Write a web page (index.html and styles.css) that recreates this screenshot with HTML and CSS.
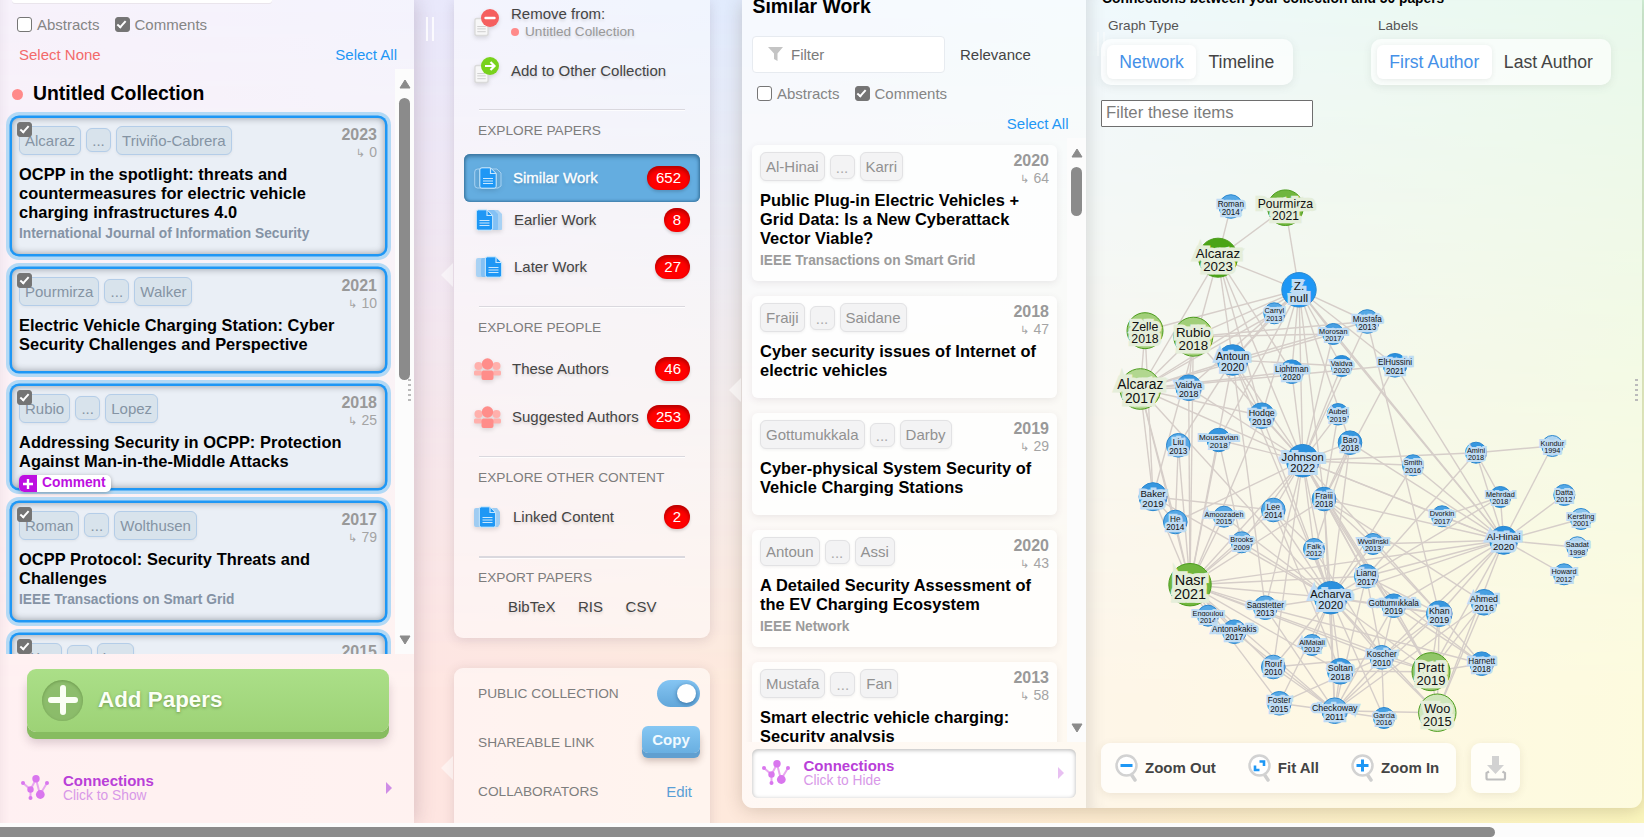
FILE: index.html
```html
<!DOCTYPE html>
<html lang="en">
<head>
<meta charset="utf-8">
<title>Similar Work</title>
<link rel="stylesheet" href="styles.css">
</head>
<body>
<svg class="defs" width="0" height="0" aria-hidden="true">
  <symbol id="i-net" viewBox="0 0 28 26"><g stroke="#e9a6f0" stroke-width="2"><path d="M2 8 9.500 14.500 9.500 23M9.500 14.500 15 4 19 19.500 26 8" fill="none"/></g><g fill="#d976ee"><circle cx="2" cy="8" r="2"/><circle cx="26" cy="8" r="2"/><circle cx="9.500" cy="23" r="2"/><circle cx="9.500" cy="14.500" r="3.200"/><circle cx="15" cy="3.800" r="3.700"/><circle cx="19.300" cy="19.500" r="4.400"/></g></symbol>
  <symbol id="i-people" viewBox="0 0 27 22"><g fill="#ffb0ac"><circle cx="4.500" cy="8" r="4"/><circle cx="22.500" cy="8" r="4"/><rect y="12.500" width="8" height="5" rx="1.500"/><rect x="19" y="12.500" width="8" height="5" rx="1.500"/></g><g fill="#ff8d8a"><circle cx="13.500" cy="6" r="5.700"/><path d="M9 12.500h9q2 1 1.500 5.500v2q0 2-2 2h-8q-2 0-2-2v-2q-.5-4.500 1.500-5.500z"/></g></symbol>
  <symbol id="i-doc" viewBox="0 0 18 22"><path d="M3 .8h8.500l5.700 5.700v12.700q0 2-2 2H2.800q-2 0-2-2V2.800q0-2 2.200-2z" fill="#1e97f5" stroke="#d7eefd" stroke-width="1"/><path d="M11.500 1v5.500h5.500M4 11.500h10M4 14h10M4 16.500h10" stroke="#c9e7fd" stroke-width="1.200" fill="none"/></symbol>
  <symbol id="i-lens" viewBox="0 0 24 28"><path d="m16 20 4 6" stroke="#cfcfcf" stroke-width="3.500" stroke-linecap="round"/><circle cx="11.500" cy="11.500" r="10" fill="#fff" stroke="#d2d2d2" stroke-width="2.500"/></symbol>
  <symbol id="i-sheet" viewBox="0 0 16 20"><rect x="1" y="1" width="14" height="18" rx="2" fill="#f7f7f7" stroke="#dadada" stroke-width="1.500"/><path d="M3.500 9.500h9M3.500 12h9M3.500 15h9" stroke="#ccc"/></symbol>
</svg>
<main class="board">
  <section class="panel collection">
    <div class="search-end"></div>
    <div class="checks"><i class="box"></i><span>Abstracts</span><i class="box on"></i><span>Comments</span></div>
    <div class="selects"><a class="none">Select None</a><a>Select All</a></div>
    <div class="scroller">
      <div class="list">
        <h2><i class="dot"></i>Untitled Collection</h2>
        <article class="card picked"><i class="box on tick"></i><header><span class="chip">Alcaraz</span><span class="chip mid">...</span><span class="chip">Triviño-Cabrera</span><div class="when"><b>2023</b><small><i>↳</i> 0</small></div></header><h3>OCPP in the spotlight: threats and countermeasures for electric vehicle charging infrastructures 4.0</h3><p>International Journal of Information Security</p></article>
        <article class="card picked"><i class="box on tick"></i><header><span class="chip">Pourmirza</span><span class="chip mid">...</span><span class="chip">Walker</span><div class="when"><b>2021</b><small><i>↳</i> 10</small></div></header><h3>Electric Vehicle Charging Station: Cyber Security Challenges and Perspective</h3></article>
        <article class="card picked"><i class="box on tick"></i><header><span class="chip">Rubio</span><span class="chip mid">...</span><span class="chip">Lopez</span><div class="when"><b>2018</b><small><i>↳</i> 25</small></div></header><h3>Addressing Security in OCPP: Protection Against Man-in-the-Middle Attacks</h3><div class="comment"><i><svg width="10" height="10"><path d="M5 0v10M0 5h10" stroke="#fff" stroke-width="2.400"/></svg></i>Comment</div></article>
        <article class="card picked"><i class="box on tick"></i><header><span class="chip">Roman</span><span class="chip mid">...</span><span class="chip">Wolthusen</span><div class="when"><b>2017</b><small><i>↳</i> 79</small></div></header><h3>OCPP Protocol: Security Threats and Challenges</h3><p>IEEE Transactions on Smart Grid</p></article>
        <article class="card picked"><i class="box on tick"></i><header><span class="chip">Woo</span><span class="chip mid">...</span><span class="chip">Lee</span><div class="when"><b>2015</b><small><i>↳</i> 0</small></div></header></article>
      </div>
      <div class="bar"><svg width="12" height="10"><path d="M1 9 6 1l5 8z" fill="#8b8b8b" stroke="#8b8b8b" stroke-linejoin="round"/></svg><i class="thumb long"></i><svg class="down" width="12" height="10"><path d="M1 1 6 9l5-8z" fill="#8b8b8b" stroke="#8b8b8b" stroke-linejoin="round"/></svg></div>
    </div>
    <div class="add"><span class="plus"><svg width="30" height="30"><path d="M15 3v24M3 15h24" stroke="#fbfff5" stroke-width="6" stroke-linecap="round"/></svg></span>Add Papers</div>
    <div class="conn"><svg width="28" height="26"><use href="#i-net"/></svg><div><b>Connections</b><span>Click to Show</span></div><i class="tri"></i></div>
    <i class="dots left"></i>
  </section>

  <div class="middle">
    <i class="grip"></i><i class="notch one"></i><i class="notch two"></i>
    <section class="panel menu">
      <div class="item two"><svg width="26" height="28"><use href="#i-sheet" x="0" y="8" width="15" height="20"/><circle cx="16" cy="9" r="9" fill="#f55f5f"/><path d="M11.500 9h9" stroke="#fff" stroke-width="2.400" stroke-linecap="round"/></svg><div>Remove from:<small><i></i>Untitled Collection</small></div></div>
      <div class="item two other"><svg width="26" height="28"><use href="#i-sheet" x="0" y="7" width="15" height="20"/><circle cx="16" cy="9" r="9" fill="#78d21c"/><path d="M11 9h9M16.500 5l4 4-4 4" stroke="#fff" stroke-width="2.200" fill="none"/></svg><div>Add to Other Collection</div></div>
      <hr><h4>EXPLORE PAPERS</h4>
      <div class="item active"><svg width="28" height="22"><rect x=".7" y="2" width="18" height="19" rx="3" fill="none" stroke="#a6d0f0"/><path d="M18 2h5l4 4v13l-3 2h-8" fill="none" stroke="#a6d0f0"/><use href="#i-doc" x="5" y="0" width="18" height="22"/></svg><span>Similar Work</span><em>652</em></div>
      <div class="item early"><svg width="28" height="22"><path d="M12 1h10l4 4v15q0 1-1 1H12z" fill="#a9d2f4"/><path d="M10 1h8l4 4v15q0 1-1 1H10z" fill="#84c1f4"/><use href="#i-doc" x="-.5" y="0" width="18" height="22"/></svg><span>Earlier Work</span><em>8</em></div>
      <div class="item late"><svg width="28" height="22"><rect x="0" y="2" width="12" height="19" rx="2" fill="#a9d2f4"/><rect x="5" y="2" width="12" height="19" rx="2" fill="#84c1f4"/><use href="#i-doc" x="8.500" y="0" width="18" height="22"/></svg><span>Later Work</span><em>27</em></div>
      <hr><h4>EXPLORE PEOPLE</h4>
      <div class="item who"><svg width="28" height="23"><use href="#i-people" width="27" height="22"/></svg><span>These Authors</span><em>46</em></div>
      <div class="item who"><svg width="28" height="23"><use href="#i-people" width="27" height="22"/></svg><span>Suggested Authors</span><em>253</em></div>
      <hr><h4>EXPLORE OTHER CONTENT</h4>
      <div class="item linked"><svg width="28" height="22"><rect x="0" y="2" width="14" height="19" rx="2" fill="#9fccf2"/><path d="M12 2h11l3 4v12l-2 3H12z" fill="#9fccf2"/><use href="#i-doc" x="4.500" y="0" width="18" height="22"/></svg><span>Linked Content</span><em>2</em></div>
      <hr class="last"><h4>EXPORT PAPERS</h4>
      <div class="export"><span>BibTeX</span><span>RIS</span><span>CSV</span></div>
    </section>
    <section class="panel share">
      <div>PUBLIC COLLECTION<i class="toggle"></i></div>
      <div>SHAREABLE LINK<b class="copy">Copy</b></div>
      <div>COLLABORATORS<a>Edit</a></div>
    </section>
  </div>

  <div class="wide">
    <i class="notch three"></i>
    <section class="similar">
      <h2>Similar Work</h2>
      <div class="filter"><div class="field"><svg width="16" height="15"><path d="M0 0h15L9.500 6.500V14L6 12V6.500z" fill="#c4c4c4"/></svg>Filter</div><span>Relevance</span></div>
      <div class="checks"><i class="box"></i><span>Abstracts</span><i class="box on"></i><span>Comments</span></div>
      <div class="selects"><a>Select All</a></div>
      <div class="scroller">
        <div class="list">
          <article class="card"><header><span class="chip">Al-Hinai</span><span class="chip mid">...</span><span class="chip">Karri</span><div class="when"><b>2020</b><small><i>↳</i> 64</small></div></header><h3>Public Plug-in Electric Vehicles + Grid Data: Is a New Cyberattack Vector Viable?</h3><p>IEEE Transactions on Smart Grid</p></article>
          <article class="card"><header><span class="chip">Fraiji</span><span class="chip mid">...</span><span class="chip">Saidane</span><div class="when"><b>2018</b><small><i>↳</i> 47</small></div></header><h3>Cyber security issues of Internet of electric vehicles</h3></article>
          <article class="card"><header><span class="chip">Gottumukkala</span><span class="chip mid">...</span><span class="chip">Darby</span><div class="when"><b>2019</b><small><i>↳</i> 29</small></div></header><h3>Cyber-physical System Security of Vehicle Charging Stations</h3></article>
          <article class="card"><header><span class="chip">Antoun</span><span class="chip mid">...</span><span class="chip">Assi</span><div class="when"><b>2020</b><small><i>↳</i> 43</small></div></header><h3>A Detailed Security Assessment of the EV Charging Ecosystem</h3><p>IEEE Network</p></article>
          <article class="card"><header><span class="chip">Mustafa</span><span class="chip mid">...</span><span class="chip">Fan</span><div class="when"><b>2013</b><small><i>↳</i> 58</small></div></header><h3>Smart electric vehicle charging: Security analysis</h3></article>
        </div>
        <div class="bar"><svg width="12" height="10"><path d="M1 9 6 1l5 8z" fill="#8b8b8b" stroke="#8b8b8b" stroke-linejoin="round"/></svg><i class="thumb"></i><svg class="down" width="12" height="10"><path d="M1 1 6 9l5-8z" fill="#8b8b8b" stroke="#8b8b8b" stroke-linejoin="round"/></svg></div>
      </div>
      <div class="conn open"><svg width="28" height="26"><use href="#i-net"/></svg><div><b>Connections</b><span>Click to Hide</span></div><i class="tri"></i></div>
    </section>
    <section class="network">
      <h5>Connections between your collection and 50 papers</h5>
      <div class="options">
        <div><label>Graph Type</label><div class="seg"><span class="on">Network</span><span>Timeline</span></div></div>
        <div><label>Labels</label><div class="seg"><span class="on">First Author</span><span>Last Author</span></div></div>
      </div>
      <input class="find" placeholder="Filter these items">
      <svg class="graph" viewBox="1101 127 541 616" width="541" height="616"></svg>
      <div class="tools">
        <div class="zoom">
          <span><svg width="24" height="28"><use href="#i-lens"/><path d="M5.500 11.500h12" stroke="#1e97f5" stroke-width="3"/></svg>Zoom Out</span>
          <span><svg width="24" height="28"><use href="#i-lens"/><path d="M11.500 7.500h4.500V12M11.500 16H7v-4.500" fill="none" stroke="#1e97f5" stroke-width="2.600"/></svg>Fit All</span>
          <span><svg width="24" height="28"><use href="#i-lens"/><path d="M5.500 11.500h12M11.500 5.500v12" stroke="#1e97f5" stroke-width="3"/></svg>Zoom In</span>
        </div>
        <div class="save"><svg width="22" height="26"><path d="M7 1h7v9h5l-8.500 9L2 10h5z" fill="#d2d2d2"/><path d="M4 16.500 1.500 18v5q0 1.500 1.500 1.500h15.500q1.500 0 1.500-1.500v-5L17.500 16.500" fill="none" stroke="#bebebe" stroke-width="2.200"/></svg></div>
      </div>
      <i class="grip"></i><i class="dots"></i>
    </section>
  </div>
</main>
<footer class="hbar"><i></i></footer>
<script src="graph.js"></script>
</body>
</html>
```
FILE: styles.css
```css
* { box-sizing: border-box; }
body { margin: 0; width: 1644px; height: 837px; overflow: hidden; font: 15px/18px "Liberation Sans", Arial, sans-serif; color: #444; background: #fcfcfc; }
h2, h3, h4, h5, p { margin: 0; }
i, em { font-style: normal; }
.defs { position: absolute; }
.board { position: relative; display: flex; height: 823px; overflow: hidden; background: linear-gradient(90deg, #efe4f7 0, #e9e8fb 430px, #e1ebfd 730px, #e0f2fa 1100px, #d2f2d9 100%); }
.board::before { content: ""; position: absolute; inset: 0; background: linear-gradient(90deg, #ffe1e4 0, #fee5e1 430px, #fee9dc 730px, #fdecd0 1100px, #fbf6bd 100%); -webkit-mask-image: linear-gradient(transparent, #000 85%); mask-image: linear-gradient(transparent, #000 85%); }
.board > * { position: relative; }
.panel { background: rgba(255,255,255,.5); box-shadow: 0 2px 12px rgba(90,60,80,.16); }

.collection { width: 414px; flex: none; display: flex; flex-direction: column; box-shadow: 2px 0 18px rgba(90,60,80,.22), inset 12px 0 10px -10px rgba(90,60,80,.07); }
.search-end { width: 260px; height: 3px; margin-left: 12px; background: #fff; border-radius: 0 0 4px 4px; box-shadow: 0 1px 0 #eae5ec; flex: none; }
.checks { display: flex; align-items: center; color: #858585; }
.collection .checks { margin: 13px 0 0 17px; height: 17px; }
.box { flex: none; width: 15px; height: 15px; margin-right: 5px; border: 1.500px solid #767676; border-radius: 3px; background: #fff; }
.checks span { margin-right: 15px; }
.box.on { background: #747474; position: relative; }
.box.on::after { content: ""; position: absolute; left: 3.500px; top: .5px; width: 5px; height: 9px; box-sizing: border-box; border: solid #fff; border-width: 0 2.200px 2.200px 0; transform: rotate(42deg); }
.selects { display: flex; justify-content: space-between; color: #1e97f5; }
.selects .none { color: #f36a6a; }
.collection .selects { margin: 13px 17px 5px 19px; height: 18px; }
.scroller { display: flex; overflow: hidden; }
.collection .scroller { height: 585px; flex: none; }
.list { flex: 1; overflow: hidden; }
h2 { font-size: 19.400px; line-height: 22px; color: #000; }
.collection h2 { display: flex; align-items: center; height: 49px; padding: 0 0 2px 12px; }
.dot { width: 11px; height: 11px; border-radius: 50%; background: #ff8a8a; margin: 4px 10px 0 0; }
.card { position: relative; margin: 0 10px 15px; padding: 7px 8px 18px; border-radius: 6px; background: rgba(255,255,255,.72); box-shadow: 0 2px 7px rgba(90,70,80,.1); }
.card.picked { margin: 0 10px 15px 12px; padding: 8px 8px 17px 7px; border-radius: 7px; background: #eaeff6; box-shadow: 0 0 0 2.500px #1e97f5, 0 0 0 6px #b3d9f5, inset 0 0 7px rgba(40,50,60,.45); }
.card header { display: flex; align-items: flex-start; height: 39px; gap: 5px; }
.chip { height: 29px; padding: 5px 5px; border: 1px solid #e2e2e4; border-radius: 6px; background: #f3f3f4; color: #919191; box-shadow: 0 1px 3px rgba(0,0,0,.06); }
.chip.mid { width: 25px; height: 24px; margin-top: 3px; padding: 3px 0; text-align: center; color: #aaa; }
.picked .chip { background: #d8e3ec; border-color: #b4cde8; color: #8594a4; }
.picked .chip.mid { margin-top: 2px; }
.when { margin-left: auto; text-align: right; color: #999; line-height: 18px; }
.when b { display: block; font-size: 16px; }
.when small { display: block; font-size: 14px; line-height: 16px; color: #a4a4a4; }
.when i { font: 11px "DejaVu Sans", sans-serif; }
.tick { position: absolute; left: 5px; top: 4px; z-index: 1; margin: 0; }
.tick.box.on { position: absolute; border-width: 1px; }
.card h3 { font-size: 16.400px; letter-spacing: .05px; line-height: 19px; color: #000; margin-right: -4px; }
.picked h3 { padding-right: 20px; }
.card p { height: 15px; margin: 4px 0 -4px; font-weight: bold; font-size: 13.750px; line-height: 17px; color: #9b9b9b; }
.picked h3 + p { color: #8593a5; line-height: 16px; }
.comment { position: absolute; left: 7px; top: 89px; height: 17px; display: flex; align-items: center; background: #fff; border-radius: 5px; overflow: hidden; color: #bd0fe1; font: bold 13.800px/15px "Liberation Sans", sans-serif; padding: 0 5px 2px 0; box-shadow: 0 1px 4px rgba(0,0,0,.3); }
.comment i { width: 18px; height: 17px; background: #bd0fe1; margin: 2px 5px 0 0; display: grid; place-items: center; }
.bar { width: 19px; background: #fcfcfc; display: flex; flex-direction: column; align-items: center; padding: 10px 0 9px; flex: none; }
.thumb { width: 11px; height: 49px; margin-top: 9px; border-radius: 6px; background: #8b8b8b; }
.thumb.long { height: 282px; }
.down { margin-top: auto; }
.add { flex: none; display: flex; align-items: center; width: 362px; height: 63px; margin: 15px 0 7px 27px; padding: 0 0 1px 15px; border-radius: 9px; background: linear-gradient(#abdf88, #9dd276); box-shadow: 0 7px 0 #87bc60, 0 11px 10px rgba(90,60,80,.22); color: #fbfff5; font-size: 22.400px; font-weight: bold; text-shadow: 0 1px 3px rgba(60,90,30,.5); }
.plus { width: 41px; height: 41px; margin: 0 15px 0 0; display: grid; place-items: center; border-radius: 50%; background: rgba(125,170,95,.6); box-shadow: inset 0 1px 3px rgba(60,100,30,.4); }
.conn { display: flex; align-items: center; }
.conn div { line-height: 15px; }
.conn b, .conn span { display: block; }
.conn b { color: #b93fd8; }
.conn span { font-size: 13.800px; color: #d898e8; }
.collection .conn { height: 50px; margin: 24px 22px 0 21px; }
.conn div { margin-left: 14px; }
.tri { margin-left: auto; border: solid transparent; border-width: 6px 0 6px 6px; border-left-color: #cf8de6; }
.dots { position: absolute; left: 1635px; top: 379px; width: 3px; height: 24px; background: repeating-linear-gradient(#bbb 0 2px, transparent 2px 5px); }
.dots.left { left: 408px; }

.middle { width: 256px; margin-left: 40px; flex: none; position: relative; }
.grip { position: absolute; left: -28px; top: 17px; width: 8px; height: 24px; border: solid rgba(255,255,255,.8); border-width: 0 2px; }
.notch { position: absolute; left: -13px; border: solid transparent; border-width: 12px 12px 12px 0; border-right-color: rgba(255,255,255,.5); }
.notch.one { top: 263px; } .notch.two { top: 756px; }
.notch.three { top: 378px; }
.menu { height: 638px; padding: 0 10px; border-radius: 0 0 9px 9px; }
.menu .item { position: relative; display: flex; align-items: center; height: 48px; padding: 0 10px; text-shadow: 0 2px 3px rgba(0,0,0,.15); }
.item svg { flex: none; margin-right: 11px; filter: drop-shadow(0 2px 2px rgba(0,0,0,.12)); }
.item.two div { line-height: 18px; }
.item.two small { display: block; font-size: 13.600px; color: #999; }
.item.two small i { display: inline-block; width: 8px; height: 8px; border-radius: 50%; background: #ff8a8a; margin-right: 6px; }
.menu .item.two { height: 46px; }
.menu .item.other { height: 48px; padding-top: 2px; }
.item em { margin-left: auto; min-width: 26px; height: 24px; padding: 3px 9px; border-radius: 12px; background: #f00; color: #fff; text-align: center; box-shadow: inset 0 3px 4px rgba(90,0,0,.45), 0 2px 3px rgba(0,0,0,.15); text-shadow: none; }
.item span { white-space: nowrap; }
.item.active { border-radius: 6px; background: #64ade0; color: #fff; box-shadow: inset 0 0 3px 1px #39759f, inset 0 3px 4px rgba(20,60,90,.35); -webkit-text-stroke: .3px #fff; }
.item.active em { -webkit-text-stroke: 0; }
.menu .early { height: 37px; margin-top: -1px; }
.menu .late { height: 58px; }
.early svg, .late svg { margin: 0 10px 0 2px; }
.item.who svg { margin-right: 10px; }
.menu hr { height: 2px; margin: 15px 15px 0; border: 0; border-top: 1px solid #dad8de; background: rgba(255,255,255,.8); }
h4 { font-size: 13.700px; font-weight: normal; line-height: 18px; color: #7d7d7d; padding-left: 14px; }
.menu h4 { margin: 11px 0 14px; }
.menu .late + hr { margin-top: 10px; }
.menu .late + hr + h4 { margin: 11px 0 8px; }
.menu .linked { margin-top: -9px; height: 50px; }
.menu hr.last { border-top-width: 2px; height: 3px; margin-top: 14px; }
.menu hr.last + h4 { margin: 10px 0 13px; }
.export { display: flex; gap: 22.500px; padding-left: 44px; margin-top: -2px; text-shadow: 0 2px 3px rgba(0,0,0,.15); }
.share { margin-top: 30px; height: 200px; padding: 1px 10px 0 24px; border-radius: 9px; font-size: 13.700px; color: #7d7d7d; }
.share div { height: 49px; display: flex; align-items: center; justify-content: space-between; }
.toggle { width: 43px; height: 27px; border-radius: 14px; background: linear-gradient(#85c5f3, #62a7da); position: relative; }
.toggle::after { content: ""; position: absolute; width: 19px; height: 19px; left: 20px; top: 4px; border-radius: 50%; background: #fff; box-shadow: 0 1px 4px rgba(0,50,100,.5); }
.copy { width: 58px; height: 27px; border-radius: 6px; margin-top: -7px; text-align: center; font-size: 15px; line-height: 27px; color: #f1faff; background: linear-gradient(#86c7f3, #69afe1); box-shadow: 0 5px 0 #609fd0, 0 8px 7px rgba(90,60,50,.3); }
.share a { font-size: 15px; color: #5a9fd6; margin-right: 8px; }

.wide { position: relative; display: flex; width: 900px; height: 808px; margin-left: 32px; border-radius: 0 0 11px 11px; background: rgba(255,255,255,.5); box-shadow: 0 2px 18px rgba(90,70,50,.24); }
.similar { width: 344px; flex: none; background: rgba(255,255,255,.4); border-radius: 0 0 0 11px; display: flex; flex-direction: column; padding-bottom: 10px; }
.similar h2 { margin: -5px 0 19px 10.500px; height: 22px; }
.filter { display: flex; align-items: center; margin-left: 10px; }
.field { width: 193px; height: 37px; display: flex; align-items: center; gap: 7px; padding-left: 15px; margin-right: 15px; border: 1px solid #e7ebf0; border-radius: 4px; background: #fff; color: #7b7b7b; }
.similar .checks { height: 17px; margin: 12px 0 12px 15px; }
.similar .selects { justify-content: flex-end; margin: 1px 17.500px 5px 0; height: 18px; }
.similar .scroller { height: 604px; flex: none; }
.similar .list { padding-top: 7px; }
.similar .card header { height: 38.500px; }
.similar .card { padding-bottom: 18.500px; }
.conn.open { height: 49px; margin: 7px 10px 0; padding: 0 12px 1px 10px; border-radius: 6px; background: #fff; box-shadow: inset 0 1px 4px rgba(0,0,0,.3); }
.open .tri { border-left-color: #e8c0f2; }
.open div { margin-left: 13.500px; }
.network { width: 556px; padding-left: 15px; box-shadow: inset 18px 0 16px -14px rgba(80,80,80,.16); }
.network h5 { height: 17px; margin: -11px 0 0 1px; font-size: 13.850px; color: #000; white-space: nowrap; }
.options { display: flex; margin-top: 11px; }
.options > div { width: 270px; }
label { display: block; margin-left: 7px; font-size: 13.600px; line-height: 18px; height: 22px; color: #555; }
.seg { display: inline-flex; height: 46px; padding: 6px; border-radius: 10px; background: rgba(255,255,255,.65); box-shadow: 0 2px 8px rgba(80,80,80,.1); font-size: 17.600px; color: #444; }
.seg span { padding: 8px 12.300px; white-space: nowrap; border-radius: 6px; }
.seg .on { background: #fff; color: #4490e8; box-shadow: 0 1px 5px rgba(80,80,80,.1); }
.find { display: block; width: 212px; height: 27px; margin-top: 15px; padding: 0 4px 2px; border: 1px solid #6e6e6e; border-radius: 1px; font: 16.750px "Liberation Sans", sans-serif; background: #fff; }
.find::placeholder { color: #7c7c7c; opacity: 1; }
.graph { display: block; }
.graph text { text-anchor: middle; paint-order: stroke; stroke-linejoin: miter; fill: #111; }
.tools { display: flex; gap: 15px; }
.zoom, .save { height: 50px; border-radius: 9px; background: rgba(255,255,255,.75); box-shadow: 0 2px 8px rgba(90,70,40,.1); display: flex; align-items: center; }
.zoom { width: 355px; padding-left: 14px; font-weight: bold; gap: 32px; }
.zoom span { display: flex; align-items: center; gap: 6px; white-space: nowrap; }
.save { width: 49px; justify-content: center; }
.network .grip { left: 355px; opacity: .45; top: 32px; }
.network .dots { left: 893px; }
.hbar { height: 14px; padding-top: 4px; background: #fcfcfc; overflow: hidden; }
.hbar i { display: block; width: 1495px; height: 10px; border-radius: 0 6px 5px 0; background: #8b8b8b; }
```
FILE: graph.js
```js
// id: [x, y, radius, name, year, colour group]
const nodes = {
  rom: [1230.8, 206.5, 12.3, 'Roman', 2014], pou: [1285.4, 207.7, 18.3, 'Pourmirza', 2021, 'g'],
  al3: [1218, 257.7, 20, 'Alcaraz', 2023, 'g'], z: [1299, 289.8, 17.7, 'Z.', 'null'],
  car: [1274.3, 313.3, 11, 'Carryl', 2013], mus: [1367.3, 321.5, 12.3, 'Mustafa', 2013],
  mor: [1333.3, 334, 11, 'Morosan', 2017], zel: [1145, 330.7, 18.5, 'Zelle', 2018, 'g'],
  rub: [1193.3, 336.7, 20, 'Rubio', 2018, 'g'], ant: [1232.7, 360, 15.8, 'Antoun', 2020],
  lig: [1291.7, 371.7, 12.3, 'Lightman', 2020], va2: [1341.7, 366, 11, 'Vaidya', 2020],
  elh: [1395, 365.3, 12.3, 'ElHussini', 2021], al7: [1140.3, 389, 20.8, 'Alcaraz', 2017, 'g'],
  vai: [1188.7, 387.7, 13.3, 'Vaidya', 2018], hod: [1261.7, 415.7, 13.3, 'Hodge', 2019],
  aub: [1338, 414.3, 11.2, 'Aubel', 2019], liu: [1178.3, 445.3, 12.3, 'Liu', 2013],
  mou: [1218.7, 440, 12.2, 'Mousavian', 2018], bao: [1350, 442.7, 12.3, 'Bao', 2018],
  joh: [1302.7, 460.7, 16.8, 'Johnson', 2022], bak: [1153, 496.7, 14.5, 'Baker', 2019],
  fra: [1324, 499, 12.3, 'Fraiji', 2018], lee: [1273.3, 510, 12.3, 'Lee', 2014],
  smi: [1413, 465.3, 11, 'Smith', 2016], he: [1175.3, 522, 12.3, 'He', 2014],
  amo: [1224, 516.7, 11, 'Amoozadeh', 2015], bro: [1241.7, 542.3, 11, 'Brooks', 2009],
  fal: [1314, 549, 11, 'Falk', 2012], wyg: [1373, 544, 11, 'Wyglinski', 2013],
  lia: [1366.3, 576.3, 12.3, 'Liang', 2017], nas: [1190, 584.7, 21.7, 'Nasr', 2021, 'g'],
  eng: [1208, 615.7, 11, 'Engoulou', 2014], ato: [1234.3, 631.7, 12.3, 'Antonakakis', 2017],
  sag: [1265.3, 607.7, 12.3, 'Sagstetter', 2013], ach: [1330.7, 597.7, 16.8, 'Acharya', 2020],
  got: [1393.7, 605.7, 12.3, 'Gottumukkala', 2019], alm: [1312, 645, 11, 'AlMajali', 2012],
  kos: [1381.7, 657.3, 12.3, 'Koscher', 2010], rou: [1273.3, 667, 12.3, 'Rouf', 2010],
  sol: [1340.3, 671.3, 13.3, 'Soltan', 2018], fos: [1279.3, 703.3, 12.3, 'Foster', 2015],
  che: [1334.7, 710.7, 13.3, 'Checkoway', 2011], gar: [1384, 718, 11, 'Garcia', 2016],
  ami: [1476, 452.7, 11, 'Amini', 2018], kun: [1552.3, 446, 11, 'Kundur', 1994],
  meh: [1500.3, 497, 11, 'Mehrdad', 2018], dat: [1564.3, 495, 11, 'Datta', 2012],
  dvo: [1442, 516.3, 11, 'Dvorkin', 2017], ker: [1581, 519, 11, 'Kersting', 2001],
  saa: [1577.3, 547.3, 11, 'Saadat', 1998], how: [1564, 574.3, 11, 'Howard', 2012],
  alh: [1503.7, 540.3, 14.5, 'Al-Hinai', 2020], ahm: [1484, 602.3, 13.3, 'Ahmed', 2016],
  kha: [1439.3, 613.7, 13.3, 'Khan', 2019], har: [1481.7, 663.7, 12.3, 'Harnett', 2018],
  pra: [1431, 671.7, 19.5, 'Pratt', 2019, 'g'], woo: [1437.3, 712.7, 19.2, 'Woo', 2015, 'g']
};
const links = {
  al3: 'rom pou z al7 ant hod bak joh lig',
  z: 'zel pou rub al7 ant vai hod mou joh car mor mus elh bao va2 lig alh fra',
  al7: 'zel rub ant vai bak nas joh hod mor lig elh ach he car',
  zel: 'bak', rub: 'mus mor joh vai nas', vai: 'nas joh',
  ant: 'car mus va2 joh ach liu nas hod sag',
  mus: 'kha joh', mor: 'alh joh', elh: 'alh fra',
  joh: 'hod mou bao smi ami fra lee alh ach aub fal nas bro got lia he kha pra va2 dvo sag rou',
  bao: 'alh fal fra', aub: 'fra', lig: 'joh', liu: 'nas he',
  bak: 'he ach lee nas', hod: 'nas ach', mou: 'nas bro',
  smi: 'alh ach', kun: 'ami',
  alh: 'kun dat ker saa how meh ami dvo fra lia ach got pra woo nas kos kha wyg',
  meh: 'lia dvo ami', ami: 'lia',
  nas: 'he amo bro lee fra ach lia eng ato sag rou fos che sol kos pra alh joh',
  ach: 'fal fra bao sag rou fos alm sol che kos gar lia got kha pra woo wyg lee bro amo',
  che: 'gar woo fos rou kos kha sag sol ato ahm',
  kos: 'gar fos rou kha pra woo lia got fal', fra: 'wyg pra ahm lia che',
  kha: 'pra har woo wyg lia got', got: 'har pra che', ahm: 'woo pra',
  pra: 'har woo sol', lia: 'har che', lee: 'sol fal', sag: 'har'
};
const blues = y => y === 'null' ? '#1e97f5' : y >= 2020 ? '#2a90de' : y >= 2018 ? '#3797df' : y >= 2016 ? '#479fe2' : y >= 2012 ? '#55a8e6' : y >= 2009 ? '#68b1e8' : y > 2000 ? '#8ac3ed' : '#aed4f1';
const greens = { 2023: '#4aa416', 2021: '#70b63e', 2019: '#91c668', 2018: '#a1cf79', 2017: '#b1d78f', 2015: '#cfe6ba' };
const svg = document.querySelector('.graph');
const seen = new Set();
let out = '<g stroke="#d6cec9" stroke-width="1.4">';
for (const from in links) {
  for (const to of links[from].split(' ')) {
    const key = [from, to].sort().join('-');
    if (seen.has(key)) continue;
    seen.add(key);
    const a = nodes[from], b = nodes[to];
    out += `<line x1="${a[0]}" y1="${a[1]}" x2="${b[0]}" y2="${b[1]}"/>`;
  }
}
out += '</g>';
for (const id in nodes) {
  const [x, y, r, name, year, kind] = nodes[id];
  const green = kind === 'g', size = r * 0.665, top = y + r * 0.1;
  out += `<circle cx="${x}" cy="${y}" r="${r - 0.5}" fill="${green ? greens[year] : blues(year)}" stroke="${green ? '#4b9c1c' : '#2a87cf'}"/>`
    + `<g font-size="${size}" stroke="${green ? '#e5eeda' : '#bfdcf4'}" stroke-width="${size * 0.52}"><text x="${x}" y="${top - size * 0.15}">${name}</text><text x="${x}" y="${top + size * 0.87}">${year}</text></g>`;
}
svg.innerHTML = out;
```
